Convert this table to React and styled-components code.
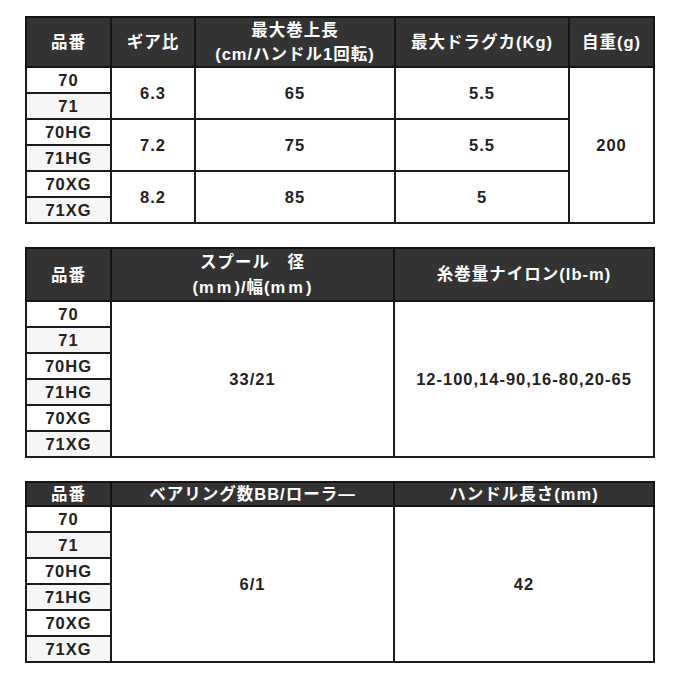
import styled, { createGlobalStyle } from "styled-components";

const models = ["70", "71", "70HG", "71HG", "70XG", "71XG"];

const GlobalStyle = createGlobalStyle`
  body {
    margin: 0;
    background: #fff;
    font-family: "Liberation Sans", "Noto Sans CJK JP", sans-serif;
  }
`;

const Page = styled.div`
  width: 680px;
  padding: 16px 0 16px;
  display: flex;
  flex-direction: column;
  align-items: center;
  gap: 23px;
`;

const SpecTable = styled.table`
  width: 628px;
  table-layout: fixed;
  border-collapse: collapse;
  border: 2px solid #1c1c1c;
  font-size: 16.5px;
  font-weight: bold;
  letter-spacing: 1px;
  color: #222;
  text-align: center;
`;

const HeadCell = styled.th`
  background: #333;
  color: #fff;
  font-weight: bold;
  border: 2px solid #141414;
  height: ${({ $h }) => $h}px;
  line-height: ${({ $lh }) => $lh || 20}px;
  padding: 0;
  vertical-align: middle;
`;

const Spaced = styled.span`
  letter-spacing: 3px;
`;

const ModelCell = styled.td`
  background: ${({ $alt }) => ($alt ? "#f6f6f6" : "#fff")};
  border: 2px solid #1c1c1c;
  height: 24px;
  padding: 0;
  line-height: 20px;
`;

const ValueCell = styled.td`
  background: #fff;
  border: 2px solid #1c1c1c;
  padding: 0;
`;

const gearRows = [
  { ratio: "6.3", length: "65", drag: "5.5" },
  { ratio: "7.2", length: "75", drag: "5.5" },
  { ratio: "8.2", length: "85", drag: "5" },
];

const GearTable = () => (
  <SpecTable>
    <colgroup>
      <col style={{ width: 85 }} />
      <col style={{ width: 84 }} />
      <col style={{ width: 200 }} />
      <col style={{ width: 174 }} />
      <col style={{ width: 85 }} />
    </colgroup>
    <thead>
      <tr>
        <HeadCell $h={47}>品番</HeadCell>
        <HeadCell $h={47}>ギア比</HeadCell>
        <HeadCell $h={47} $lh={24}>
          最大巻上長
          <br />
          (cm/ハンドル1回転)
        </HeadCell>
        <HeadCell $h={47}>最大ドラグカ(Kg)</HeadCell>
        <HeadCell $h={47}>自重(g)</HeadCell>
      </tr>
    </thead>
    <tbody>
      {models.map((m, i) => {
        const g = gearRows[Math.floor(i / 2)];
        return (
          <tr key={m}>
            <ModelCell $alt={i % 2 === 1}>{m}</ModelCell>
            {i % 2 === 0 && (
              <>
                <ValueCell rowSpan={2}>{g.ratio}</ValueCell>
                <ValueCell rowSpan={2}>{g.length}</ValueCell>
                <ValueCell rowSpan={2}>{g.drag}</ValueCell>
              </>
            )}
            {i === 0 && <ValueCell rowSpan={6}>200</ValueCell>}
          </tr>
        );
      })}
    </tbody>
  </SpecTable>
);

const SharedTable = ({ headH, headLh, heads, values }) => (
  <SpecTable>
    <colgroup>
      <col style={{ width: 85 }} />
      <col style={{ width: 283 }} />
      <col style={{ width: 260 }} />
    </colgroup>
    <thead>
      <tr>
        <HeadCell $h={headH}>品番</HeadCell>
        {heads.map((h, i) => (
          <HeadCell key={i} $h={headH} $lh={headLh}>
            {h}
          </HeadCell>
        ))}
      </tr>
    </thead>
    <tbody>
      {models.map((m, i) => (
        <tr key={m}>
          <ModelCell $alt={i % 2 === 1}>{m}</ModelCell>
          {i === 0 &&
            values.map((v, j) => (
              <ValueCell key={j} rowSpan={6}>
                {v}
              </ValueCell>
            ))}
        </tr>
      ))}
    </tbody>
  </SpecTable>
);

export default function App() {
  return (
    <>
      <GlobalStyle />
      <Page>
        <GearTable />
        <SharedTable
          headH={51}
          headLh={25}
          heads={[
            <>
              スプール　径
              <br />
              (<Spaced>mm</Spaced>)/幅(<Spaced>mm</Spaced>)
            </>,
            "糸巻量ナイロン(lb-m)",
          ]}
          values={["33/21", "12-100,14-90,16-80,20-65"]}
        />
        <SharedTable
          headH={22}
          heads={["ベアリング数BB/ローラ—", "ハンドル長さ(mm)"]}
          values={["6/1", "42"]}
        />
      </Page>
    </>
  );
}
